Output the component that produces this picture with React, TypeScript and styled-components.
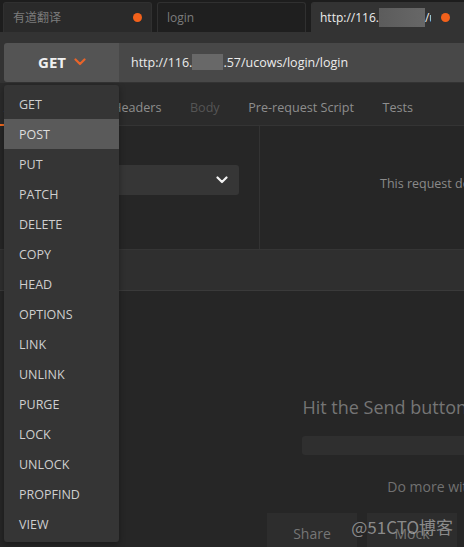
import styled, { createGlobalStyle } from 'styled-components'

const GlobalStyle = createGlobalStyle`
  html, body {
    margin: 0;
    padding: 0;
    background: #262626;
  }
  body {
    font-family: "Open Sans", "Noto Sans CJK SC", sans-serif;
    -webkit-font-smoothing: antialiased;
  }
`

const METHODS = [
  'GET',
  'POST',
  'PUT',
  'PATCH',
  'DELETE',
  'COPY',
  'HEAD',
  'OPTIONS',
  'LINK',
  'UNLINK',
  'PURGE',
  'LOCK',
  'UNLOCK',
  'PROPFIND',
  'VIEW',
]

const REQUEST_TABS = [
  { label: 'Authorization', active: true },
  { label: 'Headers' },
  { label: 'Body', disabled: true },
  { label: 'Pre-request Script' },
  { label: 'Tests' },
]

const EMPTY_ACTIONS = ['Share', 'Mock', 'Monitor', 'Document']

function Chevron({ color, width = 12 }: { color: string; width?: number }) {
  return (
    <svg width={width} height={8} viewBox="0 0 12 8" fill="none">
      <polyline
        points="1.5,1.5 6,6 10.5,1.5"
        stroke={color}
        strokeWidth="2.2"
        strokeLinecap="round"
        strokeLinejoin="round"
      />
    </svg>
  )
}

export default function App() {
  return (
    <>
      <GlobalStyle />
      <Window>
        <Frame>
          <TabStrip>
            <Tab>
              <TabLabel>有道翻译</TabLabel>
              <Dot />
            </Tab>
            <Tab $dark>
              <TabLabel>login</TabLabel>
            </Tab>
            <Tab $active>
              <TabLabel $active>
                http://116.<TabRedact />/ucows/login/login
              </TabLabel>
              <Dot />
            </Tab>
          </TabStrip>

          <Toolbar>
            <MethodButton>
              GET
              <Chevron color="#e8642a" />
            </MethodButton>
            <UrlInput>
              http://116.<UrlRedact />.57/ucows/login/login
            </UrlInput>
          </Toolbar>

          <RequestTabs>
            {REQUEST_TABS.map((t) => (
              <RequestTab key={t.label} $active={t.active} $disabled={t.disabled}>
                {t.label}
              </RequestTab>
            ))}
          </RequestTabs>

          <AuthPane>
            <AuthLeft>
              <TypeSelect>
                <Chevron color="#f2f2f2" />
              </TypeSelect>
            </AuthLeft>
            <AuthRight>
              This request does not use any authorization. Learn more about
              authorization
            </AuthRight>
          </AuthPane>

          <ResponseBar />

          <ResponseEmpty>
            <EmptyTitle>Hit the Send button to get a response.</EmptyTitle>
            <EmptyBar />
            <EmptyHint>Do more with requests</EmptyHint>
            <ActionRow>
              {EMPTY_ACTIONS.map((a) => (
                <ActionButton key={a}>{a}</ActionButton>
              ))}
            </ActionRow>
          </ResponseEmpty>
        </Frame>

        <MethodMenu>
          {METHODS.map((m) => (
            <MethodItem key={m} $hover={m === 'POST'}>
              {m}
            </MethodItem>
          ))}
        </MethodMenu>

        <Watermark>@51CTO博客</Watermark>
      </Window>
    </>
  )
}

const Window = styled.div`
  position: relative;
  width: 464px;
  height: 547px;
  overflow: hidden;
  background: #262626;
`

const Frame = styled.div`
  width: 924px;
  height: 547px;
  display: flex;
  flex-direction: column;
`

const TabStrip = styled.div`
  height: 32px;
  box-sizing: border-box;
  display: flex;
  align-items: flex-end;
  gap: 5px;
  padding-left: 3px;
  background: #1d1d1d;
`

const Tab = styled.div<{ $active?: boolean; $dark?: boolean }>`
  width: ${(p) => (p.$active ? '190px' : '149px')};
  height: 30px;
  box-sizing: border-box;
  display: flex;
  align-items: center;
  justify-content: space-between;
  padding: 0 ${(p) => (p.$active ? '50px' : '9px')} 0 ${(p) => (p.$active ? '8px' : '9px')};
  border: 1px solid ${(p) => (p.$active ? '#333' : '#303030')};
  border-bottom: none;
  border-radius: 3px 3px 0 0;
  background: ${(p) => (p.$active ? '#333333' : p.$dark ? '#1f1f1f' : '#2a2a2a')};
`

const TabLabel = styled.span<{ $active?: boolean }>`
  font-size: 12px;
  color: ${(p) => (p.$active ? '#ececec' : '#7c7c7c')};
  white-space: nowrap;
  overflow: hidden;
  max-width: ${(p) => (p.$active ? '111px' : 'none')};
  display: flex;
  align-items: center;
`

const Dot = styled.span`
  flex: none;
  width: 9px;
  height: 9px;
  border-radius: 50%;
  background: #f2611b;
`

const TabRedact = styled.span`
  display: inline-block;
  flex: none;
  width: 46px;
  height: 19px;
  background: linear-gradient(90deg, #5c5c5c, #676767);
`

const Toolbar = styled.div`
  height: 52px;
  box-sizing: border-box;
  display: flex;
  align-items: flex-start;
  padding: 11px 0 0 4px;
  background: #333333;
`

const MethodButton = styled.div`
  width: 115px;
  height: 39px;
  display: flex;
  align-items: center;
  justify-content: center;
  gap: 8px;
  padding-left: 1px;
  box-sizing: border-box;
  background: #545454;
  border-radius: 3px 0 0 3px;
  font-size: 15px;
  font-weight: 700;
  color: #f0f0f0;
`

const UrlInput = styled.div`
  flex: 1;
  height: 39px;
  display: flex;
  align-items: center;
  padding-left: 12px;
  background: #484848;
  font-size: 12.5px;
  color: #ececec;
  white-space: nowrap;
`

const UrlRedact = styled.span`
  display: inline-block;
  width: 31px;
  height: 16px;
  background: #686868;
`

const RequestTabs = styled.div`
  height: 43px;
  box-sizing: border-box;
  display: flex;
  align-items: center;
  gap: 28.5px;
  padding-left: 4px;
  background: #2b2b2b;
  border-bottom: 1px solid #343434;
`

const RequestTab = styled.div<{ $active?: boolean; $disabled?: boolean }>`
  position: relative;
  height: 100%;
  display: flex;
  align-items: center;
  padding-top: 6px;
  box-sizing: border-box;
  font-size: 12.6px;
  color: ${(p) => (p.$disabled ? '#555' : '#8e8e8e')};

  &::after {
    content: '';
    display: ${(p) => (p.$active ? 'block' : 'none')};
    position: absolute;
    left: -4px;
    right: -8px;
    bottom: -1px;
    height: 2px;
    background: #f26b21;
  }
`

const AuthPane = styled.div`
  height: 124px;
  display: flex;
`

const AuthLeft = styled.div`
  width: 260px;
  box-sizing: border-box;
  padding: 39px 20px 0 20px;
  border-right: 1px solid #333;
`

const TypeSelect = styled.div`
  height: 30px;
  display: flex;
  align-items: center;
  justify-content: flex-end;
  padding-right: 11px;
  background: #363636;
  border-radius: 3px;
`

const AuthRight = styled.div`
  flex: 1;
  padding: 49px 0 0 120px;
  font-size: 12.5px;
  color: #8a8a8a;
  white-space: nowrap;
`

const ResponseBar = styled.div`
  height: 40px;
  background: #2f2f2f;
  border-top: 1px solid #353535;
  border-bottom: 1px solid #3a3a3a;
`

const ResponseEmpty = styled.div`
  flex: 1;
  display: flex;
  flex-direction: column;
  align-items: center;
  padding-top: 104px;
`

const EmptyTitle = styled.div`
  font-size: 18px;
  line-height: 24px;
  color: #757575;
`

const EmptyBar = styled.div`
  width: 320px;
  height: 19px;
  margin-top: 17px;
  background: #2f2f2f;
  border-radius: 3px;
`

const EmptyHint = styled.div`
  margin-top: 22px;
  font-size: 14px;
  line-height: 20px;
  color: #717171;
`

const ActionRow = styled.div`
  display: flex;
  gap: 10px;
  margin-top: 16px;
`

const ActionButton = styled.div`
  width: 90px;
  height: 34px;
  display: flex;
  align-items: center;
  justify-content: center;
  padding-top: 7px;
  box-sizing: border-box;
  background: #2d2d2d;
  font-size: 14px;
  color: #767676;
`

const MethodMenu = styled.div`
  position: absolute;
  left: 4px;
  top: 85px;
  width: 115px;
  padding: 4px 0 3px;
  background: #353535;
  border-radius: 3px;
  box-shadow: 0 2px 6px rgba(0, 0, 0, 0.35);
`

const MethodItem = styled.div<{ $hover?: boolean }>`
  height: 30px;
  display: flex;
  align-items: center;
  padding-left: 15px;
  font-size: 12.5px;
  color: ${(p) => (p.$hover ? '#dedede' : '#cfcfcf')};
  background: ${(p) => (p.$hover ? '#5a5a5a' : 'transparent')};
`

const Watermark = styled.div`
  position: absolute;
  right: 11px;
  bottom: 8px;
  font-family: "Noto Sans CJK SC", "Open Sans", sans-serif;
  font-size: 17px;
  color: rgba(200, 200, 200, 0.62);
  pointer-events: none;
`
